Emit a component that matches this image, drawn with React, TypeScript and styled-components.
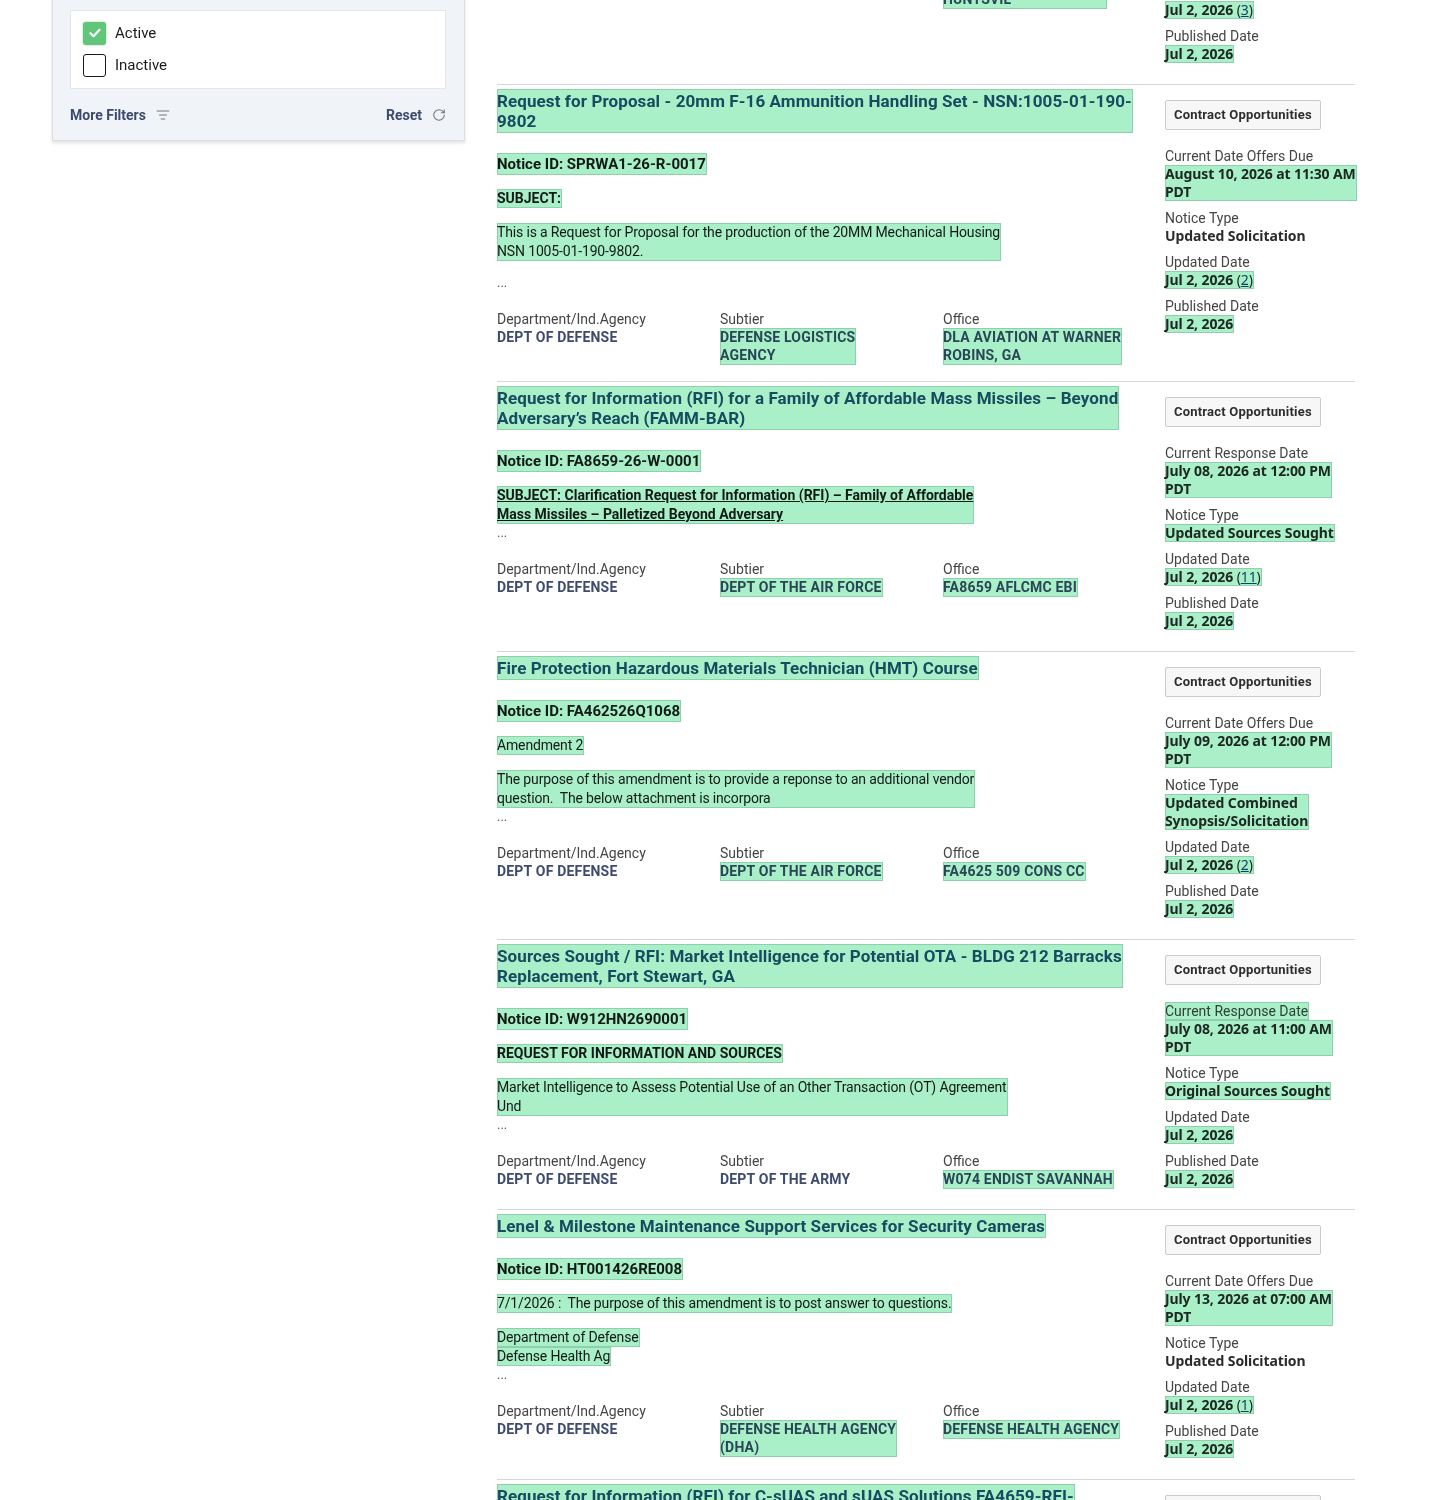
import React from 'react';
import styled, { createGlobalStyle } from 'styled-components';
import { ListFilter, RotateCw } from 'lucide-react';

type Tone = 'plain' | 'bold' | 'link';

type SnippetType = {
	tone: Tone
	lines: string[]
	split?: boolean
}

type AgencyType = {
	lines: string[]
	hl?: boolean
}

type NoticeType = {
	title: string[]
	noticeId: string
	snippets: SnippetType[]
	looseEnd?: boolean
	agency: AgencyType[]
	dueLabel: string
	dueLabelHl?: boolean
	due: string[]
	noticeType: string[]
	noticeTypeHl?: boolean
	updated: string
	updatedCount?: number
	published: string
}

const notices: NoticeType[] = [
	{
		title: ['Facilities Reduction Program Support Services'],
		noticeId: 'W912DY26R0042',
		snippets: [{ tone: 'plain', lines: ['Sources sought for demolition and facility reduction support.'] }],
		agency: [
			{ lines: ['DEPT OF DEFENSE'] },
			{ lines: ['DEPT OF THE ARMY'] },
			{ lines: ['W2V6 USA ENG SPT CTR', 'HUNTSVIL'], hl: true },
		],
		dueLabel: 'Current Response Date',
		due: ['July 16, 2026 at 02:00 PM', 'CDT'],
		noticeType: ['Updated Sources Sought'],
		noticeTypeHl: true,
		updated: 'Jul 2, 2026',
		updatedCount: 3,
		published: 'Jul 2, 2026',
	},
	{
		title: ['Request for Proposal - 20mm F-16 Ammunition Handling Set - NSN:1005-01-190-', '9802'],
		noticeId: 'Notice ID: SPRWA1-26-R-0017',
		snippets: [
			{ tone: 'bold', lines: ['SUBJECT:'] },
			{ tone: 'plain', lines: ['This is a Request for Proposal for the production of the 20MM Mechanical Housing', 'NSN 1005-01-190-9802.'] },
		],
		looseEnd: true,
		agency: [
			{ lines: ['DEPT OF DEFENSE'] },
			{ lines: ['DEFENSE LOGISTICS', 'AGENCY'], hl: true },
			{ lines: ['DLA AVIATION AT WARNER', 'ROBINS, GA'], hl: true },
		],
		dueLabel: 'Current Date Offers Due',
		due: ['August 10, 2026 at 11:30 AM', 'PDT'],
		noticeType: ['Updated Solicitation'],
		updated: 'Jul 2, 2026',
		updatedCount: 2,
		published: 'Jul 2, 2026',
	},
	{
		title: ['Request for Information (RFI) for a Family of Affordable Mass Missiles \u2013 Beyond', 'Adversary\u2019s Reach (FAMM-BAR)'],
		noticeId: 'Notice ID: FA8659-26-W-0001',
		snippets: [
			{
				tone: 'link',
				lines: ['SUBJECT: Clarification Request for Information (RFI) \u2013 Family of Affordable', 'Mass Missiles \u2013 Palletized Beyond Adversary'],
			},
		],
		agency: [
			{ lines: ['DEPT OF DEFENSE'] },
			{ lines: ['DEPT OF THE AIR FORCE'], hl: true },
			{ lines: ['FA8659 AFLCMC EBI'], hl: true },
		],
		dueLabel: 'Current Response Date',
		due: ['July 08, 2026 at 12:00 PM', 'PDT'],
		noticeType: ['Updated Sources Sought'],
		noticeTypeHl: true,
		updated: 'Jul 2, 2026',
		updatedCount: 11,
		published: 'Jul 2, 2026',
	},
	{
		title: ['Fire Protection Hazardous Materials Technician (HMT) Course'],
		noticeId: 'Notice ID: FA462526Q1068',
		snippets: [
			{ tone: 'plain', lines: ['Amendment 2'] },
			{ tone: 'plain', lines: ['The purpose of this amendment is to provide a reponse to an additional vendor', 'question.\u00a0 The below attachment is incorpora'] },
		],
		agency: [
			{ lines: ['DEPT OF DEFENSE'] },
			{ lines: ['DEPT OF THE AIR FORCE'], hl: true },
			{ lines: ['FA4625 509 CONS CC'], hl: true },
		],
		dueLabel: 'Current Date Offers Due',
		due: ['July 09, 2026 at 12:00 PM', 'PDT'],
		noticeType: ['Updated Combined', 'Synopsis/Solicitation'],
		noticeTypeHl: true,
		updated: 'Jul 2, 2026',
		updatedCount: 2,
		published: 'Jul 2, 2026',
	},
	{
		title: ['Sources Sought / RFI: Market Intelligence for Potential OTA - BLDG 212 Barracks', 'Replacement, Fort Stewart, GA'],
		noticeId: 'Notice ID: W912HN2690001',
		snippets: [
			{ tone: 'bold', lines: ['REQUEST FOR INFORMATION AND SOURCES'] },
			{ tone: 'plain', lines: ['Market Intelligence to Assess Potential Use of an Other Transaction (OT) Agreement', 'Und'] },
		],
		agency: [
			{ lines: ['DEPT OF DEFENSE'] },
			{ lines: ['DEPT OF THE ARMY'] },
			{ lines: ['W074 ENDIST SAVANNAH'], hl: true },
		],
		dueLabel: 'Current Response Date',
		dueLabelHl: true,
		due: ['July 08, 2026 at 11:00 AM', 'PDT'],
		noticeType: ['Original Sources Sought'],
		noticeTypeHl: true,
		updated: 'Jul 2, 2026',
		published: 'Jul 2, 2026',
	},
	{
		title: ['Lenel & Milestone Maintenance Support Services for Security Cameras'],
		noticeId: 'Notice ID: HT001426RE008',
		snippets: [
			{ tone: 'plain', lines: ['7/1/2026 :\u00a0 The purpose of this amendment is to post answer to questions.'] },
			{ tone: 'plain', lines: ['Department of Defense', 'Defense Health Ag'], split: true },
		],
		agency: [
			{ lines: ['DEPT OF DEFENSE'] },
			{ lines: ['DEFENSE HEALTH AGENCY', '(DHA)'], hl: true },
			{ lines: ['DEFENSE HEALTH AGENCY'], hl: true },
		],
		dueLabel: 'Current Date Offers Due',
		due: ['July 13, 2026 at 07:00 AM', 'PDT'],
		noticeType: ['Updated Solicitation'],
		updated: 'Jul 2, 2026',
		updatedCount: 1,
		published: 'Jul 2, 2026',
	},
	{
		title: ['Request for Information (RFI) for C-sUAS and sUAS Solutions FA4659-RFI-', '0626CSUAS'],
		noticeId: 'Notice ID: FA4659-RFI-0626CSUAS',
		snippets: [{ tone: 'plain', lines: ['Request for Information for counter small unmanned aircraft systems.'] }],
		agency: [
			{ lines: ['DEPT OF DEFENSE'] },
			{ lines: ['DEPT OF THE AIR FORCE'], hl: true },
			{ lines: ['FA4659 TRANSCOM'], hl: true },
		],
		dueLabel: 'Current Response Date',
		due: ['July 20, 2026 at 04:00 PM', 'CDT'],
		noticeType: ['Sources Sought'],
		updated: 'Jul 2, 2026',
		published: 'Jul 2, 2026',
	},
]

const Lines = ({ lines }: { lines: string[] }) => (
	<>
		{lines.map((line, i) => (
			<React.Fragment key={i}>
				{i > 0 && <br />}
				{line}
			</React.Fragment>
		))}
	</>
)

export default function App() {
	return (
		<>
			<GlobalStyle />
			<Page>
				<FilterPanel>
					<FilterGroup>Keyword</FilterGroup>
					<FilterGroup>Federal Organizations</FilterGroup>
					<FilterGroup>Dates</FilterGroup>
					<GroupHeading>Status</GroupHeading>
					<OptionBox>
						<Option>
							<CheckBox $checked>
								<svg width="14" height="14" viewBox="0 0 14 14">
									<path d="M2.5 7.2 L5.6 10.2 L11.5 3.8" fill="none" stroke="#fff" strokeWidth="2.2" strokeLinecap="round" strokeLinejoin="round" />
								</svg>
							</CheckBox>
							Active
						</Option>
						<Option>
							<CheckBox />
							Inactive
						</Option>
					</OptionBox>
					<PanelFooter>
						<FooterButton>
							More Filters
							<ListFilter size={14} strokeWidth={1.8} />
						</FooterButton>
						<FooterButton>
							Reset
							<RotateCw size={14} strokeWidth={1.8} />
						</FooterButton>
					</PanelFooter>
				</FilterPanel>

				<Results>
					{notices.map((n, idx) => (
						<ResultRow key={idx}>
							<MainCol>
								<Title>
									<Mark $pad="2px 1px 2px 0">
										<Lines lines={n.title} />
									</Mark>
								</Title>
								<NoticeLine>
									<Mark $pad="1px 1px 1px 0">{n.noticeId}</Mark>
								</NoticeLine>
								<Summary>
									{n.snippets.map((s, i) => (
										<SnippetText key={i} $tone={s.tone}>
											{s.split ? (
												s.lines.map((l, j) => <Mark key={j}>{l}</Mark>)
											) : (
												<Mark>
													<Lines lines={s.lines} />
												</Mark>
											)}
										</SnippetText>
									))}
								</Summary>
								<Ellipsis $loose={n.looseEnd}>...</Ellipsis>
								<AgencyGrid>
									{['Department/Ind.Agency', 'Subtier', 'Office'].map((label, i) => (
										<div key={label}>
											<FieldLabel>{label}</FieldLabel>
											<FieldValue>
												{n.agency[i].hl ? (
													<Mark $pad="0 1px 1px 0">
														<Lines lines={n.agency[i].lines} />
													</Mark>
												) : (
													<span>
														<Lines lines={n.agency[i].lines} />
													</span>
												)}
											</FieldValue>
										</div>
									))}
								</AgencyGrid>
							</MainCol>

							<SideCol>
								<TypeTag>Contract Opportunities</TypeTag>
								<MetaList>
									<MetaField>
										<MetaLabel>{n.dueLabelHl ? <Mark>{n.dueLabel}</Mark> : n.dueLabel}</MetaLabel>
										<MetaValue>
											<Mark>
												<Lines lines={n.due} />
											</Mark>
										</MetaValue>
									</MetaField>
									<MetaField>
										<MetaLabel>Notice Type</MetaLabel>
										<MetaValue>
											{n.noticeTypeHl ? (
												<Mark>
													<Lines lines={n.noticeType} />
												</Mark>
											) : (
												<span>
													<Lines lines={n.noticeType} />
												</span>
											)}
										</MetaValue>
									</MetaField>
									<MetaField>
										<MetaLabel>Updated Date</MetaLabel>
										<MetaValue>
											<Mark>
												{n.updated}
												{n.updatedCount !== undefined && (
													<Count>
														{' ('}
														<CountLink>{n.updatedCount}</CountLink>
														{')'}
													</Count>
												)}
											</Mark>
										</MetaValue>
									</MetaField>
									<MetaField>
										<MetaLabel>Published Date</MetaLabel>
										<MetaValue>
											<Mark>{n.published}</Mark>
										</MetaValue>
									</MetaField>
								</MetaList>
							</SideCol>
						</ResultRow>
					))}
				</Results>
			</Page>
		</>
	)
}

const GlobalStyle = createGlobalStyle`
	* {
		box-sizing: border-box;
	}
	html, body {
		margin: 0;
		padding: 0;
		background: #ffffff;
	}
	body {
		font-family: Roboto, "Noto Sans", "Liberation Sans", sans-serif;
		color: #1b1b1b;
	}
`

// the results list is scrolled part way down, so the page starts above the fold
const Page = styled.div`
	display: flex;
	align-items: flex-start;
	gap: 32px;
	padding-left: 52px;
	margin-top: -185px;
`

const FilterPanel = styled.aside`
	flex: 0 0 413px;
	background: #f0f4f9;
	border: 1px solid #dcdee0;
	box-shadow: 0 2px 3px rgba(0, 0, 0, 0.12);
	padding: 16px 18px 15px 17px;
`

const FilterGroup = styled.div`
	height: 44px;
	display: flex;
	align-items: center;
	border-bottom: 1px solid #dcdee0;
	font-size: 15px;
	font-weight: 700;
	color: #1b1b1b;
`

const GroupHeading = styled.div`
	height: 36px;
	margin-bottom: 10px;
	display: flex;
	align-items: flex-end;
	font-size: 15px;
	font-weight: 700;
`

const OptionBox = styled.div`
	background: #ffffff;
	border: 1px solid #e3e7ec;
	padding: 10px 12px 11px;
	display: flex;
	flex-direction: column;
	gap: 8px;
`

const Option = styled.label`
	height: 24px;
	display: flex;
	align-items: center;
	gap: 9px;
	font-size: 15px;
	color: #1b1b1b;
`

const CheckBox = styled.span<{ $checked?: boolean }>`
	width: 23px;
	height: 23px;
	border-radius: 3px;
	display: inline-flex;
	align-items: center;
	justify-content: center;
	background: ${props => (props.$checked ? '#63c57a' : '#ffffff')};
	border: ${props => (props.$checked ? 'none' : '1.5px solid #1b1b1b')};
	box-shadow: ${props => (props.$checked ? '0 0 2px rgba(99, 197, 122, 0.8)' : 'none')};
`

const PanelFooter = styled.div`
	margin-top: 16px;
	height: 20px;
	display: flex;
	align-items: center;
	justify-content: space-between;
`

const FooterButton = styled.button`
	display: inline-flex;
	align-items: center;
	gap: 10px;
	background: none;
	border: 0;
	padding: 0;
	font: 700 14px/20px Roboto, sans-serif;
	color: #3d4a6b;
	cursor: pointer;

	svg {
		color: #71767a;
	}
`

const Results = styled.main`
	flex: 0 0 858px;
`

const ResultRow = styled.article`
	display: grid;
	grid-template-columns: minmax(0, 1fr) 190px;
	column-gap: 20px;
	padding-bottom: 16px;

	& + & {
		border-top: 1px solid #d6d7d9;
	}
`

const MainCol = styled.div`
	padding-top: 4px;
	min-width: 0;
`

// search-hit highlight, laid over the text so it tints it as well
const Mark = styled.span<{ $pad?: string }>`
	position: relative;
	display: inline-block;
	padding: ${props => props.$pad ?? '0 1px 0 0'};

	&::after {
		content: '';
		position: absolute;
		inset: 0;
		background: #a9f0c8;
		border: 1px solid #8fcfab;
		mix-blend-mode: multiply;
		pointer-events: none;
	}
`

const Title = styled.h3`
	margin: 0 0 20px;
	display: flex;
	align-items: flex-start;
	font: 700 17px/20px Roboto, sans-serif;
	letter-spacing: 0.1px;
	color: #22507a;
	white-space: nowrap;
`

const NoticeLine = styled.div`
	margin-bottom: 14px;
	display: flex;
	align-items: flex-start;
	font: 700 15px/20px Roboto, sans-serif;
	color: #1b1b1b;
`

const Summary = styled.div`
	display: flex;
	flex-direction: column;
	align-items: flex-start;
	gap: 15px;
`

const SnippetText = styled.div<{ $tone: Tone }>`
	display: flex;
	flex-direction: column;
	align-items: flex-start;
	font-size: 14px;
	line-height: 19px;
	white-space: nowrap;
	color: #1b1b1b;
	font-weight: ${props => (props.$tone === 'plain' ? 400 : 700)};
	letter-spacing: ${props => (props.$tone === 'plain' ? '-0.15px' : '0')};

	& > span {
		text-decoration: ${props => (props.$tone === 'link' ? 'underline' : 'none')};
	}
`

const Ellipsis = styled.div<{ $loose?: boolean }>`
	margin: ${props => (props.$loose ? '13px' : '0')} 0 18px;
	font-size: 13px;
	line-height: 18px;
	color: #565c65;
`

const AgencyGrid = styled.div`
	display: grid;
	grid-template-columns: repeat(3, 183px);
	column-gap: 40px;
`

const FieldLabel = styled.div`
	font-size: 14px;
	line-height: 18px;
	color: #454545;
`

const FieldValue = styled.div`
	display: flex;
	align-items: flex-start;
	font-size: 14px;
	font-weight: 700;
	line-height: 18px;
	letter-spacing: 0.2px;
	color: #3e4a6e;
	white-space: nowrap;
`

const SideCol = styled.div`
	padding: 15px 0 5px;
	display: flex;
	flex-direction: column;
	align-items: flex-start;
`

const TypeTag = styled.div`
	height: 30px;
	padding: 0 8px;
	margin-bottom: 17px;
	border: 1px solid #c9cbce;
	border-radius: 2px;
	background: #f7f7f7;
	font: 700 13px/28px Roboto, sans-serif;
	letter-spacing: 0.2px;
	color: #2e2e2e;
	white-space: nowrap;
`

const MetaList = styled.div`
	display: flex;
	flex-direction: column;
	align-items: flex-start;
	gap: 8px;
`

const MetaField = styled.div`
	display: flex;
	flex-direction: column;
	align-items: flex-start;
`

const MetaLabel = styled.div`
	display: flex;
	font-size: 14px;
	line-height: 18px;
	color: #454545;
	white-space: nowrap;
`

const MetaValue = styled.div`
	display: flex;
	align-items: flex-start;
	font-family: "Noto Sans", "Open Sans", sans-serif;
	font-size: 14px;
	font-weight: 700;
	line-height: 18px;
	letter-spacing: -0.1px;
	color: #2b2b2b;
	white-space: nowrap;
`

const Count = styled.span`
	font-weight: 400;
`

const CountLink = styled.span`
	color: #1a4480;
	text-decoration: underline;
`
